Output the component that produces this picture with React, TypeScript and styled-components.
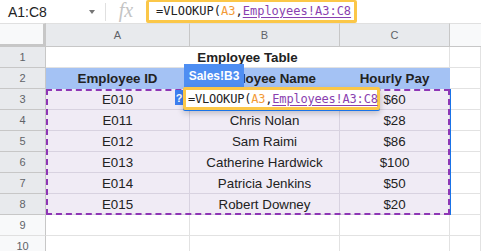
import React from "react";
import styled, { createGlobalStyle, css } from "styled-components";

const GlobalStyle = createGlobalStyle`
  html, body { margin: 0; padding: 0; background: #fff; overflow: hidden; }
  body { font-family: "Liberation Sans", Arial, sans-serif; color: #222; }
`;

const Page = styled.div`
  width: 481px;
  height: 251px;
  overflow: hidden;
  background: #fff;
`;

const FormulaBar = styled.div`
  display: flex;
  align-items: center;
  height: 23px;
  box-sizing: border-box;
`;

const NameBox = styled.div`
  width: 105px;
  display: flex;
  align-items: center;
  justify-content: space-between;
  padding: 0 10px 0 8px;
  box-sizing: border-box;
  font-size: 14px;
  color: #222;
`;

const Caret = styled.span`
  width: 0;
  height: 0;
  border-left: 3.5px solid transparent;
  border-right: 3.5px solid transparent;
  border-top: 4px solid #757575;
  margin-top: 1px;
`;

const Divider = styled.div`
  width: 1px;
  height: 18px;
  background: #e0e0e0;
`;

const FxLabel = styled.div`
  width: 40px;
  height: 23px;
  display: flex;
  align-items: center;
  justify-content: center;
  font-family: "Liberation Serif", "Times New Roman", serif;
  font-style: italic;
  font-size: 20px;
  color: #c4c4c4;
  padding-bottom: 2px;
  box-sizing: border-box;
`;

const FormulaBox = styled.div`
  width: 211px;
  height: 23px;
  box-sizing: border-box;
  border: 3px solid #fbc748;
  border-top-width: 2px;
  border-radius: 2px;
  display: flex;
  align-items: center;
  padding-left: 7px;
  margin-top: -1px;
`;

const Formula = styled.span`
  font-family: "DejaVu Sans Mono", "Liberation Mono", monospace;
  font-size: 12px;
  color: #222;
  white-space: nowrap;
  letter-spacing: 0;
`;

const RefA = styled.span`
  color: #f39a36;
`;

const RefB = styled.span`
  color: #8a3fb0;
  text-decoration: underline;
  text-underline-offset: 2px;
`;

const Sheet = styled.div`
  position: relative;
  display: grid;
  grid-template-columns: 46px 144px 150px 110px 31px;
  grid-template-rows: 24px repeat(10, 21px);
`;

const headerBase = css`
  box-sizing: border-box;
  display: flex;
  align-items: center;
  justify-content: center;
  font-size: 11px;
  color: #5f6368;
  border-right: 1px solid #c7c7c7;
  border-bottom: 1px solid #c7c7c7;
`;

const ColHead = styled.div<{ $active?: boolean }>`
  ${headerBase};
  border-top: 1px solid #e0e0e0;
  background: ${(p) => (p.$active ? "#e8eaed" : "#f8f9fa")};
  ${(p) => !p.$active && "border-right: none;"}
`;

const Corner = styled.div`
  ${headerBase};
  border-top: 1px solid #e0e0e0;
  background: #f8f9fa;
  border-right: 3px solid #c7c7c7;
  border-bottom: 3px solid #c7c7c7;
`;

const RowHead = styled.div<{ $active?: boolean }>`
  ${headerBase};
  background: ${(p) => (p.$active ? "#e8eaed" : "#f8f9fa")};
  border-bottom-color: ${(p) => (p.$active ? "#c7c7c7" : "#e0e0e0")};
`;

type Fill = "none" | "head" | "tint";

const Cell = styled.div<{ $fill?: Fill; $bold?: boolean; $span?: number }>`
  box-sizing: border-box;
  display: flex;
  align-items: center;
  justify-content: center;
  font-size: 13.33px;
  white-space: nowrap;
  overflow: hidden;
  color: #222;
  font-weight: ${(p) => (p.$bold ? 700 : 400)};
  grid-column: ${(p) => (p.$span ? `span ${p.$span}` : "auto")};
  background: ${(p) =>
    p.$fill === "head" ? "#a4c2f4" : p.$fill === "tint" ? "#f0ebf5" : "#fff"};
  border-right: 1px solid
    ${(p) =>
      p.$fill === "head" ? "#a4c2f4" : p.$fill === "tint" ? "#d8d2e0" : "#e2e2e2"};
  border-bottom: 1px solid
    ${(p) =>
      p.$fill === "head" ? "#a4c2f4" : p.$fill === "tint" ? "#d8d2e0" : "#e2e2e2"};
  padding-top: 1px;
`;

const CopyRange = styled.div`
  position: absolute;
  left: 46px;
  top: 66px;
  width: 404px;
  height: 126px;
  box-sizing: border-box;
  border: 2px dashed #8e36b5;
  box-shadow: 1px 0 0 #1a73e8;
  pointer-events: none;
`;

const Popup = styled.div`
  position: absolute;
  left: 175px;
  top: 41px;
  display: flex;
  flex-direction: column;
`;

const SheetTab = styled.div`
  margin-left: 9px;
  width: 60px;
  height: 23px;
  background: #4e8ef2;
  color: #fff;
  font-weight: 700;
  font-size: 12px;
  display: flex;
  align-items: center;
  justify-content: center;
  box-sizing: border-box;
`;

const EditRow = styled.div`
  display: flex;
  align-items: flex-start;
`;

const HelpBadge = styled.div`
  width: 8px;
  height: 15px;
  margin-top: 3px;
  background: #3d7ef0;
  color: #fff;
  font-weight: 700;
  font-size: 11px;
  display: flex;
  align-items: center;
  justify-content: center;
`;

const Editor = styled.div`
  width: 197px;
  height: 23px;
  box-sizing: border-box;
  border: 3px solid #fbc748;
  border-radius: 2px;
  background: #fff;
  display: flex;
  align-items: center;
  padding-left: 2px;
  box-shadow: 0 1px 0 #1a73e8, 0 3px 6px rgba(0, 0, 0, 0.22);
`;

const EditFormula = styled(Formula)`
  letter-spacing: -0.2px;
`;

const rows: [string, string, string][] = [
  ["E010", "", "$60"],
  ["E011", "Chris Nolan", "$28"],
  ["E012", "Sam Raimi", "$86"],
  ["E013", "Catherine Hardwick", "$100"],
  ["E014", "Patricia Jenkins", "$50"],
  ["E015", "Robert Downey", "$20"],
];

const FormulaText = () => (
  <>
    =VLOOKUP(<RefA>A3</RefA>,<RefB>Employees!A3:C8</RefB>
  </>
);

export default function App() {
  return (
    <Page>
      <GlobalStyle />
      <FormulaBar>
        <NameBox>
          A1:C8
          <Caret />
        </NameBox>
        <Divider />
        <FxLabel>fx</FxLabel>
        <FormulaBox>
          <Formula>
            <FormulaText />
          </Formula>
        </FormulaBox>
      </FormulaBar>
      <Sheet>
        <Corner />
        <ColHead $active>A</ColHead>
        <ColHead $active>B</ColHead>
        <ColHead $active>C</ColHead>
        <ColHead />

        <RowHead $active>1</RowHead>
        <Cell $bold $span={3}>
          Employee Table
        </Cell>
        <Cell />

        <RowHead $active>2</RowHead>
        <Cell $fill="head" $bold>
          Employee ID
        </Cell>
        <Cell $fill="head" $bold>
          Employee Name
        </Cell>
        <Cell $fill="head" $bold>
          Hourly Pay
        </Cell>
        <Cell />

        {rows.map((r, i) => (
          <React.Fragment key={r[0]}>
            <RowHead $active>{i + 3}</RowHead>
            <Cell $fill="tint">{r[0]}</Cell>
            <Cell $fill="tint">{r[1]}</Cell>
            <Cell $fill="tint">{r[2]}</Cell>
            <Cell />
          </React.Fragment>
        ))}

        {[9, 10].map((n) => (
          <React.Fragment key={n}>
            <RowHead>{n}</RowHead>
            <Cell />
            <Cell />
            <Cell />
            <Cell />
          </React.Fragment>
        ))}

        <CopyRange />
        <Popup>
          <SheetTab>Sales!B3</SheetTab>
          <EditRow>
            <HelpBadge>?</HelpBadge>
            <Editor>
              <EditFormula>
                <FormulaText />
              </EditFormula>
            </Editor>
          </EditRow>
        </Popup>
      </Sheet>
    </Page>
  );
}
